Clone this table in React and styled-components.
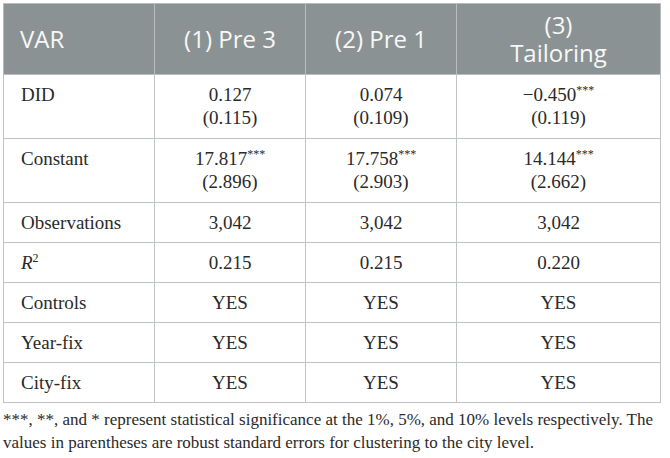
import React from "react";
import styled, { createGlobalStyle } from "styled-components";

const GlobalStyle = createGlobalStyle`
  html, body {
    margin: 0;
    padding: 0;
    background: #ffffff;
  }
`;

const Page = styled.div`
  width: 670px;
  height: 458px;
  padding: 3px 10px 0 3px;
  box-sizing: border-box;
  background: #ffffff;
`;

const Table = styled.table`
  width: 657px;
  border-collapse: collapse;
  table-layout: fixed;
  font-family: "Liberation Serif", "Times New Roman", serif;
  color: #2a2a2a;
`;

const HeadCell = styled.th`
  height: 70px;
  padding: 0 16px;
  background: #8b9293;
  color: #f7f7f7;
  font-family: "Open Sans", "Noto Sans", sans-serif;
  font-size: 24px;
  font-weight: 400;
  line-height: 28px;
  text-align: ${(p) => (p.$left ? "left" : "center")};
  border: 1.5px solid #b9bdbd;
  vertical-align: middle;
`;

const Cell = styled.td`
  height: ${(p) => (p.$tall ? "47px" : "23px")};
  padding: 8px 17px;
  font-size: 19px;
  line-height: 23px;
  text-align: ${(p) => (p.$left ? "left" : "center")};
  vertical-align: top;
  border: 1.5px solid #bfc3c3;
`;

const Stars = styled.sup`
  font-size: 12px;
  line-height: 0;
  vertical-align: 7px;
`;

const Italic = styled.i`
  font-style: italic;
`;

const Note = styled.p`
  margin: 5px 0 0;
  font-family: "Liberation Serif", "Times New Roman", serif;
  font-size: 17px;
  line-height: 23px;
  color: #2a2a2a;
`;

const rows = [
  { label: "DID", values: [["0.127", "", "(0.115)"], ["0.074", "", "(0.109)"], ["\u22120.450", "***", "(0.119)"]] },
  { label: "Constant", values: [["17.817", "***", "(2.896)"], ["17.758", "***", "(2.903)"], ["14.144", "***", "(2.662)"]] },
  { label: "Observations", values: [["3,042"], ["3,042"], ["3,042"]] },
  { label: "R2", values: [["0.215"], ["0.215"], ["0.220"]] },
  { label: "Controls", values: [["YES"], ["YES"], ["YES"]] },
  { label: "Year-fix", values: [["YES"], ["YES"], ["YES"]] },
  { label: "City-fix", values: [["YES"], ["YES"], ["YES"]] },
];

const Label = ({ text }) =>
  text === "R2" ? (
    <>
      <Italic>R</Italic>
      <Stars>2</Stars>
    </>
  ) : (
    text
  );

export default function App() {
  return (
    <Page>
      <GlobalStyle />
      <Table>
        <colgroup>
          <col style={{ width: 151 }} />
          <col style={{ width: 151 }} />
          <col style={{ width: 151 }} />
          <col style={{ width: 204 }} />
        </colgroup>
        <thead>
          <tr>
            <HeadCell $left>VAR</HeadCell>
            <HeadCell>(1) Pre 3</HeadCell>
            <HeadCell>(2) Pre 1</HeadCell>
            <HeadCell>
              (3)
              <br />
              Tailoring
            </HeadCell>
          </tr>
        </thead>
        <tbody>
          {rows.map((row) => {
            const tall = row.values[0].length > 1;
            return (
              <tr key={row.label}>
                <Cell $left $tall={tall}>
                  <Label text={row.label} />
                </Cell>
                {row.values.map((v, i) => (
                  <Cell key={i} $tall={tall}>
                    {v[0]}
                    {v[1] ? <Stars>{v[1]}</Stars> : null}
                    {tall ? (
                      <>
                        <br />
                        {v[2]}
                      </>
                    ) : null}
                  </Cell>
                ))}
              </tr>
            );
          })}
        </tbody>
      </Table>
      <Note>
        ***, **, and * represent statistical significance at the 1%, 5%, and 10% levels respectively. The
        values in parentheses are robust standard errors for clustering to the city level.
      </Note>
    </Page>
  );
}
